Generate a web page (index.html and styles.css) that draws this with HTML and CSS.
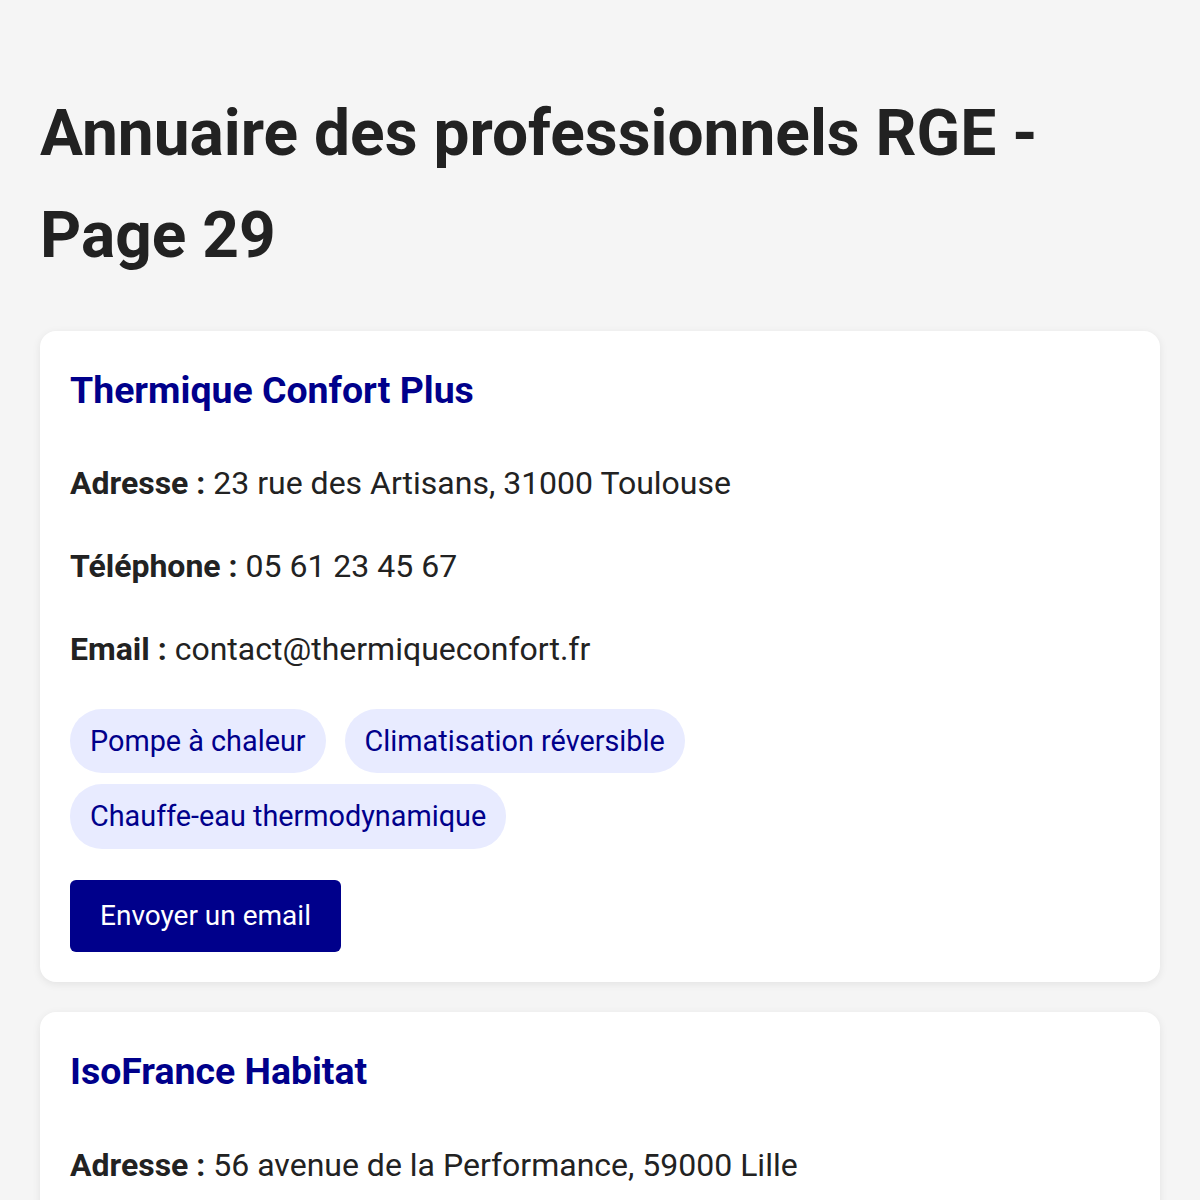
FILE: index.html
```html
<!DOCTYPE html>
<html lang="fr">
<head>
  <meta charset="UTF-8">
  <meta name="viewport" content="width=device-width, initial-scale=1.0">
  <title>Annuaire des professionnels RGE - Page 29</title>
  <link rel="stylesheet" href="styles.css">
</head>
<body>
  <h1>Annuaire des professionnels RGE - Page 29</h1>

  <div class="card">
    <h3>Thermique Confort Plus</h3>
    <p><strong>Adresse :</strong> 23 rue des Artisans, 31000 Toulouse</p>
    <p><strong>Téléphone :</strong> 05 61 23 45 67</p>
    <p><strong>Email :</strong> contact@thermiqueconfort.fr</p>
    <div class="tags">
      <span class="tag">Pompe à chaleur</span>
      <span class="tag">Climatisation réversible</span>
      <span class="tag">Chauffe-eau thermodynamique</span>
    </div>
    <a class="btn" href="mailto:contact@thermiqueconfort.fr">Envoyer un email</a>
  </div>

  <div class="card">
    <h3>IsoFrance Habitat</h3>
    <p><strong>Adresse :</strong> 56 avenue de la Performance, 59000 Lille</p>
    <p><strong>Téléphone :</strong> 03 20 45 67 89</p>
    <p><strong>Email :</strong> info@isofrance-habitat.fr</p>
    <div class="tags">
      <span class="tag">Isolation des combles</span>
      <span class="tag">Isolation des murs</span>
    </div>
    <a class="btn" href="mailto:info@isofrance-habitat.fr">Envoyer un email</a>
  </div>
</body>
</html>
```

FILE: styles.css
```css
body {
  font-family: Roboto, "Liberation Sans", Arial, sans-serif;
  font-size: 32px;
  line-height: 1.6;
  background-color: #f5f5f5;
  color: #222;
  margin: 0;
  padding: 40px;
}
h1 {
  font-size: 64px;
  margin: 0.67em 0;
}
.card {
  background-color: #fff;
  border-radius: 16px;
  padding: 30px;
  margin-bottom: 30px;
  box-shadow: 0 2px 8px rgba(0, 0, 0, 0.08);
}
.card h3 {
  color: #00008b;
  font-size: 1.17em;
  margin: 0 0 1em;
}
.card p {
  margin: 32px 0;
}
.tags {
  display: flex;
  flex-wrap: wrap;
  gap: 11px 19px;
  margin-top: 34px;
}
.tag {
  background-color: #e8ebff;
  color: #00008b;
  font-size: 0.9em;
  padding: 9px 20px;
  border-radius: 32px;
}
.btn {
  display: inline-block;
  margin-top: 31px;
  padding: 14px 30px;
  background-color: #00008b;
  color: #fff;
  font-size: 28px;
  text-decoration: none;
  border-radius: 6px;
}
```
